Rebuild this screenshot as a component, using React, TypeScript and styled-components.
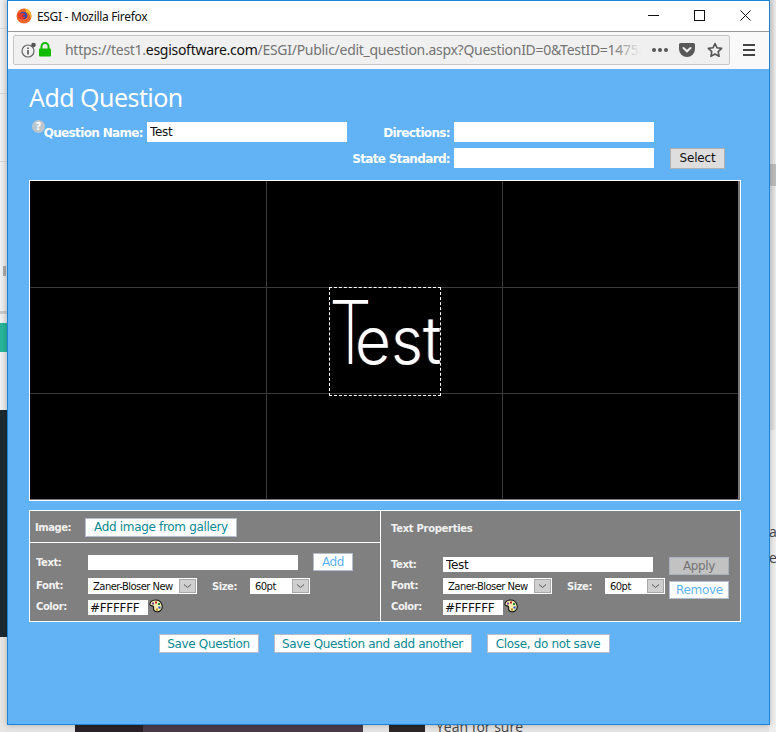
import React from "react";
import styled, {createGlobalStyle} from "styled-components";

const Global = createGlobalStyle`
  html, body {margin: 0; padding: 0; background: #ececec;}
  * {box-sizing: border-box;}
`;

const Page = styled.div`
  position: relative;
  width: 776px;
  height: 732px;
  overflow: hidden;
  background: linear-gradient(90deg, #f1f1f1 0, #e4e4e4 7px, #e4e4e4 769px, #dcdcdc 772px, #ececec 776px);
`;

/* scraps of the desktop showing round the popup window */
const Behind = styled.div<{$x: number, $y: number, $w: number, $h: number, $c: string}>`
  position: absolute;
  left: ${p => p.$x}px;
  top: ${p => p.$y}px;
  width: ${p => p.$w}px;
  height: ${p => p.$h}px;
  background: ${p => p.$c};
`;

const BehindText = styled.div<{$x: number, $y: number}>`
  position: absolute;
  left: ${p => p.$x}px;
  top: ${p => p.$y}px;
  font: 14px "Open Sans", sans-serif;
  color: #444;
  white-space: nowrap;
`;

const Window = styled.div`
  position: relative;
  margin-left: 7px;
  width: 763px;
  height: 725px;
  border: 1px solid #1a84d8;
  display: flex;
  flex-direction: column;
  background: #62b2f6;
  box-shadow: 0 0 6px rgba(0, 0, 0, .25);
`;

const TitleBar = styled.div`
  height: 31px;
  flex: none;
  display: flex;
  align-items: center;
  background: #fff;
  border-bottom: 1px solid #9a9a9a;
  padding: 0 1px 0 8px;
`;

const TitleText = styled.div`
  margin-left: 5px;
  font: 12px "Noto Sans", sans-serif;
  letter-spacing: -.32px;
  color: #111;
  flex: 1;
`;

const WinButton = styled.div`
  width: 46px;
  height: 28px;
  margin-bottom: 2px;
  display: flex;
  align-items: center;
  justify-content: center;
`;

const NavBar = styled.div`
  height: 37px;
  flex: none;
  display: flex;
  align-items: center;
  background: #f9f9f9;
  padding: 0 11px 2px 5px;
`;

const UrlBox = styled.div`
  width: 717px;
  height: 30px;
  display: flex;
  align-items: center;
  padding-left: 7px;
  background: #f0f0f0;
  border: 1px solid #c6c6c6;
  border-radius: 2px;
`;

const UrlIcons = styled.div`
  width: 44px;
  flex: none;
  display: flex;
  align-items: center;
  gap: 2px;
`;

const UrlText = styled.div`
  position: relative;
  width: 576px;
  flex: none;
  overflow: hidden;
  white-space: nowrap;
  font: 14px "Noto Sans", sans-serif;
  letter-spacing: -.28px;
  color: #737373;

  b {font-weight: 400; color: #111;}

  &:after {
    content: "";
    position: absolute;
    right: 0;
    top: 0;
    bottom: 0;
    width: 28px;
    background: linear-gradient(90deg, rgba(240, 240, 240, 0), #f0f0f0);
  }
`;

const UrlActions = styled.div`
  flex: 1;
  display: flex;
  align-items: center;
  justify-content: flex-end;
  gap: 12px;
  padding-right: 6px;
`;

const Dots = styled.div`
  display: flex;
  gap: 2px;
  margin-right: -1px;
  i {width: 4px; height: 4px; border-radius: 50%; background: #555;}
`;

const Menu = styled.div`
  margin-left: 13px;
  display: flex;
  flex-direction: column;
  gap: 3px;
  i {width: 12px; height: 2px; background: #444;}
`;

const Content = styled.div`
  flex: 1;
  padding: 10px 28px 0 21px;
  font-family: "DejaVu Sans", sans-serif;
`;

const Heading = styled.h1`
  margin: 0;
  font: 400 25px/36px "Noto Sans", sans-serif;
  letter-spacing: -.55px;
  color: #fff;
  height: 38px;
`;

const QuestionForm = styled.div`
  position: relative;
  margin-top: 5px;
  display: grid;
  grid-template-columns: 118px 200px 107px 200px auto;
  grid-auto-rows: 20px;
  row-gap: 6px;
  align-items: center;
`;

const FormLabel = styled.label<{$col?: number}>`
  grid-column: ${p => p.$col ?? "auto"};
  display: flex;
  justify-content: flex-end;
  align-items: center;
  padding: 1px 4px 0 0;
  font: 700 12px "DejaVu Sans", sans-serif;
  letter-spacing: -.65px;
  color: #fff;
  white-space: nowrap;
`;

const HelpIcon = styled.span`
  position: absolute;
  left: 3px;
  top: -2px;
  width: 13px;
  height: 13px;
  border-radius: 50%;
  background: #bcc6ce;
  color: #fff;
  font: 700 10px/13px "DejaVu Sans", sans-serif;
  text-align: center;
  letter-spacing: 0;
`;

const TextBox = styled.input<{$w?: number, $h?: number}>`
  display: block;
  width: ${p => p.$w ?? 200}px;
  height: ${p => p.$h ?? 20}px;
  border: 0;
  outline: 0;
  padding: 0 3px;
  background: #fff;
  color: #111;
  font: 12px "DejaVu Sans", sans-serif;
  letter-spacing: -.3px;
`;

const ColorBox = styled(TextBox)`
  padding: 0 2px;
`;

const SelectButton = styled.button`
  width: 55px;
  height: 21px;
  margin-left: 16px;
  padding: 0;
  background: #dedede;
  border: 1px solid #b0b0b0;
  font: 12px "DejaVu Sans", sans-serif;
  letter-spacing: -.2px;
  color: #111;
`;

const Canvas = styled.div`
  position: relative;
  margin-top: 12px;
  height: 321px;
  border: 1px solid #fff;
  background: #000;
  padding: 0 2px 1px 0;
  box-shadow: inset -2px -1px 0 #777;
`;

const CanvasGrid = styled.div`
  display: grid;
  grid-template-columns: 237px 236px 235px;
  grid-template-rows: 107px 106px 105px;
`;

const Cell = styled.div`
  border-right: 1px solid #3a3a3a;
  border-bottom: 1px solid #3a3a3a;
  &:nth-child(3n) {border-right: 0;}
  &:nth-child(n + 7) {border-bottom: 0;}
`;

const TextObject = styled.div`
  position: absolute;
  left: 299px;
  top: 106px;
  width: 112px;
  height: 109px;
  display: flex;
  align-items: baseline;
  border: 1px dashed #fff;
  overflow: hidden;
  color: #fff;
  font-family: "Inter", sans-serif;
  white-space: nowrap;
  text-shadow: -1px 0 0 rgba(80, 170, 255, .35), 1px 0 0 rgba(255, 90, 50, .35);
`;

/* the picture's typeface has a tall narrow capital over low round letters */
const CapLetter = styled.span`
  flex: none;
  width: 26px;
  margin-left: -1px;
  font-size: 88px;
  font-weight: 200;
  line-height: 88px;
  transform: scaleX(.78);
  transform-origin: 0 0;
`;

const LowLetters = styled.span`
  flex: none;
  font-size: 66px;
  font-weight: 300;
  line-height: 88px;
  transform: scaleX(.94);
  transform-origin: 0 0;
`;

const Panels = styled.div`
  margin-top: 9px;
  height: 112px;
  display: grid;
  grid-template-columns: 351px 1fr;
  border: 1px solid #fff;
  background: #808080;
  color: #fff;
`;

const Panel = styled.div`
  &:first-child {border-right: 1px solid #fff;}
`;

const ImageRow = styled.div`
  height: 32px;
  display: flex;
  align-items: center;
  padding: 1px 0 0 5px;
  border-bottom: 1px solid #fff;
`;

const SmallLabel = styled.span<{$w?: number}>`
  display: block;
  flex: none;
  width: ${p => p.$w ? `${p.$w}px` : "auto"};
  font: 700 10px "DejaVu Sans", sans-serif;
  letter-spacing: -.45px;
  color: #f2f2f2;
  white-space: nowrap;
`;

const FieldLabel = styled(SmallLabel)`
  margin-top: -2px;
`;

const SizeLabel = styled(SmallLabel)`
  margin-left: 15px;
`;

const LinkButton = styled.button<{$w?: number, $h?: number, $muted?: boolean}>`
  width: ${p => p.$w ? `${p.$w}px` : "auto"};
  height: ${p => p.$h ?? 19}px;
  padding: 0 6px;
  background: #fff;
  border: 1px solid #b6bccb;
  font: 12px "DejaVu Sans", sans-serif;
  letter-spacing: -.33px;
  color: ${p => p.$muted ? "#62b2f6" : "#0a8a94"};
  white-space: nowrap;
`;

const AddButton = styled(LinkButton)`
  margin: 3px 0 0 3px;
`;

const GreyButton = styled(LinkButton)`
  background: #c2c2c2;
  border-color: #a9b0ba;
  color: #737373;
`;

const FieldsWrap = styled.div<{$left: number, $top: number}>`
  padding: ${p => p.$top}px 0 0 ${p => p.$left}px;
  display: flex;
`;

const Fields = styled.div`
  display: flex;
  flex-direction: column;
`;

const FieldRow = styled.div<{$h: number, $pt?: number}>`
  height: ${p => p.$h}px;
  padding-top: ${p => p.$pt ?? 0}px;
  display: flex;
  align-items: center;
`;

const Dropdown = styled.div<{$w: number}>`
  width: ${p => p.$w}px;
  height: 16px;
  display: flex;
  align-items: center;
  justify-content: space-between;
  padding: 0 1px 0 5px;
  background: #fff;
  color: #111;
  font: 10px "DejaVu Sans", sans-serif;
  letter-spacing: -.55px;
  white-space: nowrap;
`;

const DropArrow = styled.span`
  width: 17px;
  height: 14px;
  flex: none;
  display: flex;
  align-items: center;
  justify-content: center;
  background: #cfcfcf;
  border: 1px solid #a8a8a8;
`;

const Palette = styled.svg`
  margin: -3px 0 0 1px;
`;

const SideButtons = styled.div`
  display: flex;
  flex-direction: column;
  gap: 6px;
  margin: 7px 0 0 4px;
`;

const PanelTitle = styled(SmallLabel)`
  height: 39px;
  padding: 12px 0 0 10px;
  letter-spacing: -.3px;
`;

const Actions = styled.div`
  margin-top: 12px;
  display: flex;
  justify-content: center;
  gap: 15px;
  padding-right: 2px;
`;

const arrow = (
    <svg width="9" height="6" viewBox="0 0 9 6">
        <path d="M1 1.500l3.500 3 3.500-3" fill="none" stroke="#555" strokeWidth="1"/>
    </svg>
);

const PaletteIcon = () => (
    <Palette width="14" height="14" viewBox="0 0 14 14">
        <path d="M6.500 1C3 1 .7 3.200 1 5.600c.3 1.600 2.600 1 3.400 1.900.7.9-.3 2.300.5 3.600C6 12.900 9 13.300 11 12c2-1.300 2.600-4 1.900-6.200C12.100 3 9.500 1 6.500 1z" fill="#f2eeb0" stroke="#111" strokeWidth="1.100"/>
        <rect x="3" y="3.500" width="2" height="2" fill="#7a3b9a"/>
        <rect x="6" y="2.500" width="2" height="2" fill="#c02020"/>
        <rect x="9" y="4" width="2" height="2" fill="#2a8a3a"/>
        <rect x="9.500" y="7.500" width="2" height="2" fill="#2040c0"/>
        <rect x="7" y="9.500" width="2" height="2" fill="#c08020"/>
    </Palette>
);

function TextFields({value, textPad}: {value: string, textPad?: number}) {
    return (
        <Fields>
            <FieldRow $h={25} $pt={textPad}>
                <SmallLabel $w={52}>Text:</SmallLabel>
                <TextBox $w={210} $h={15} defaultValue={value} readOnly/>
            </FieldRow>
            <FieldRow $h={22}>
                <FieldLabel $w={52}>Font:</FieldLabel>
                <Dropdown $w={109}>Zaner-Bloser New<DropArrow>{arrow}</DropArrow></Dropdown>
                <SizeLabel $w={38}>Size:</SizeLabel>
                <Dropdown $w={60}>60pt<DropArrow>{arrow}</DropArrow></Dropdown>
            </FieldRow>
            <FieldRow $h={21}>
                <FieldLabel $w={52}>Color:</FieldLabel>
                <ColorBox $w={60} $h={15} defaultValue="#FFFFFF" readOnly/>
                <PaletteIcon/>
            </FieldRow>
        </Fields>
    );
}

function FirefoxIcon() {
    return (
        <svg width="16" height="16" viewBox="0 0 16 16">
            <circle cx="8" cy="8" r="7.500" fill="#f0632a"/>
            <path d="M8 .5a7.500 7.500 0 0 1 7.500 7.500c0 1-.2 2-.6 2.800C14.500 7 12 4.500 9 4.500 11 3.500 10 1.500 8 .5z" fill="#f7b52c"/>
            <circle cx="7.500" cy="7.500" r="3.800" fill="#3b4aa8"/>
            <path d="M2 5c1 0 1.500.5 2.500.5 2-.5 4 0 5 1-1 1-2.500.5-3 1.500.5 1 2 1 3 .5-.5 2-3 3.200-5 2.300C2.500 9.800 1.500 7.500 2 5z" fill="#e8392c"/>
        </svg>
    );
}

export default function App() {
    const cells = Array.from({length: 9});

    return (
        <Page>
            <Global/>

            <Behind $x={0} $y={28} $w={7} $h={1} $c="#d8d8d8"/>
            <Behind $x={0} $y={93} $w={7} $h={1} $c="#d8d8d8"/>
            <Behind $x={0} $y={161} $w={7} $h={1} $c="#d8d8d8"/>
            <Behind $x={3} $y={266} $w={3} $h={10} $c="#a8a8a8"/>
            <Behind $x={0} $y={311} $w={7} $h={3} $c="#c9c9c9"/>
            <Behind $x={0} $y={323} $w={7} $h={29} $c="#26b598"/>
            <Behind $x={0} $y={410} $w={7} $h={227} $c="#1e2a31"/>
            <Behind $x={0} $y={637} $w={7} $h={95} $c="#e8e6e2"/>
            <Behind $x={769} $y={164} $w={7} $h={22} $c="#bcbcbc"/>
            <Behind $x={769} $y={430} $w={7} $h={302} $c="#efefef"/>
            <Behind $x={75} $y={724} $w={68} $h={8} $c="#2a2228"/>
            <Behind $x={143} $y={724} $w={220} $h={8} $c="#4a3b48"/>
            <Behind $x={389} $y={724} $w={36} $h={8} $c="#2c2626"/>
            <BehindText $x={436} $y={717}>Yeah for sure</BehindText>
            <BehindText $x={769} $y={522}>a</BehindText>
            <BehindText $x={769} $y={548}>el</BehindText>

            <Window>
                <TitleBar>
                    <FirefoxIcon/>
                    <TitleText>ESGI - Mozilla Firefox</TitleText>
                    <WinButton>
                        <svg width="11" height="11" viewBox="0 0 11 11"><path d="M0 5.500h11" stroke="#111"/></svg>
                    </WinButton>
                    <WinButton>
                        <svg width="11" height="11" viewBox="0 0 11 11"><rect x=".5" y=".5" width="10" height="10" fill="none" stroke="#111"/></svg>
                    </WinButton>
                    <WinButton>
                        <svg width="11" height="11" viewBox="0 0 11 11"><path d="M.5.500l10 10M10.500.500l-10 10" stroke="#111"/></svg>
                    </WinButton>
                </TitleBar>

                <NavBar>
                    <UrlBox>
                        <UrlIcons>
                            <svg width="15" height="16" viewBox="0 0 15 16">
                                <circle cx="7" cy="9" r="6" fill="none" stroke="#666" strokeWidth="1.200"/>
                                <path d="M7 8v4.500M7 5.500v1.500" stroke="#555" strokeWidth="1.600"/>
                                <circle cx="12.500" cy="3" r="2.300" fill="#555"/>
                            </svg>
                            <svg width="14" height="15" viewBox="0 0 14 15">
                                <path d="M3.500 7V4.500a3.500 3.500 0 0 1 7 0V7" fill="none" stroke="#12bc00" strokeWidth="2"/>
                                <rect x="1" y="6.500" width="12" height="8" rx="1" fill="#12bc00"/>
                            </svg>
                        </UrlIcons>
                        <UrlText>https://test1.<b>esgisoftware.com</b>/ESGI/Public/edit_question.aspx?QuestionID=0&amp;TestID=147580</UrlText>
                        <UrlActions>
                            <Dots><i/><i/><i/></Dots>
                            <svg width="16" height="14" viewBox="0 0 16 14">
                                <path d="M1.500 0h13A1.500 1.500 0 0 1 16 1.500V6a8 8 0 0 1-16 0V1.500A1.500 1.500 0 0 1 1.500 0z" fill="#595959"/>
                                <path d="M4.500 5L8 8.300 11.500 5" fill="none" stroke="#f0f0f0" strokeWidth="2" strokeLinecap="round"/>
                            </svg>
                            <svg width="16" height="16" viewBox="0 0 16 16">
                                <path d="M8 1.500l2 4.300 4.700.6-3.500 3.200.9 4.700L8 12l-4.100 2.300.9-4.700L1.300 6.400 6 5.800z" fill="none" stroke="#555" strokeWidth="1.600" strokeLinejoin="round"/>
                            </svg>
                        </UrlActions>
                    </UrlBox>
                    <Menu><i/><i/><i/></Menu>
                </NavBar>

                <Content>
                    <Heading>Add Question</Heading>

                    <QuestionForm>
                        <HelpIcon>?</HelpIcon>
                        <FormLabel>Question Name:</FormLabel>
                        <TextBox defaultValue="Test" readOnly/>
                        <FormLabel>Directions:</FormLabel>
                        <TextBox readOnly/>
                        <FormLabel $col={3}>State Standard:</FormLabel>
                        <TextBox readOnly/>
                        <SelectButton>Select</SelectButton>
                    </QuestionForm>

                    <Canvas>
                        <CanvasGrid>
                            {cells.map((_, i) => <Cell key={i}/>)}
                        </CanvasGrid>
                        <TextObject><CapLetter>T</CapLetter><LowLetters>est</LowLetters></TextObject>
                    </Canvas>

                    <Panels>
                        <Panel>
                            <ImageRow>
                                <SmallLabel $w={50}>Image:</SmallLabel>
                                <LinkButton $w={152}>Add image from gallery</LinkButton>
                            </ImageRow>
                            <FieldsWrap $left={6} $top={7}>
                                <TextFields value=""/>
                                <AddButton $w={40} $h={18} $muted>Add</AddButton>
                            </FieldsWrap>
                        </Panel>
                        <Panel>
                            <PanelTitle>Text Properties</PanelTitle>
                            <FieldsWrap $left={10} $top={0}>
                                <TextFields value="Test" textPad={4}/>
                                <SideButtons>
                                    <GreyButton $w={60} $h={18}>Apply</GreyButton>
                                    <LinkButton $w={60} $h={18} $muted>Remove</LinkButton>
                                </SideButtons>
                            </FieldsWrap>
                        </Panel>
                    </Panels>

                    <Actions>
                        <LinkButton $w={100}>Save Question</LinkButton>
                        <LinkButton $w={198}>Save Question and add another</LinkButton>
                        <LinkButton $w={123}>Close, do not save</LinkButton>
                    </Actions>
                </Content>
            </Window>
        </Page>
    );
}
